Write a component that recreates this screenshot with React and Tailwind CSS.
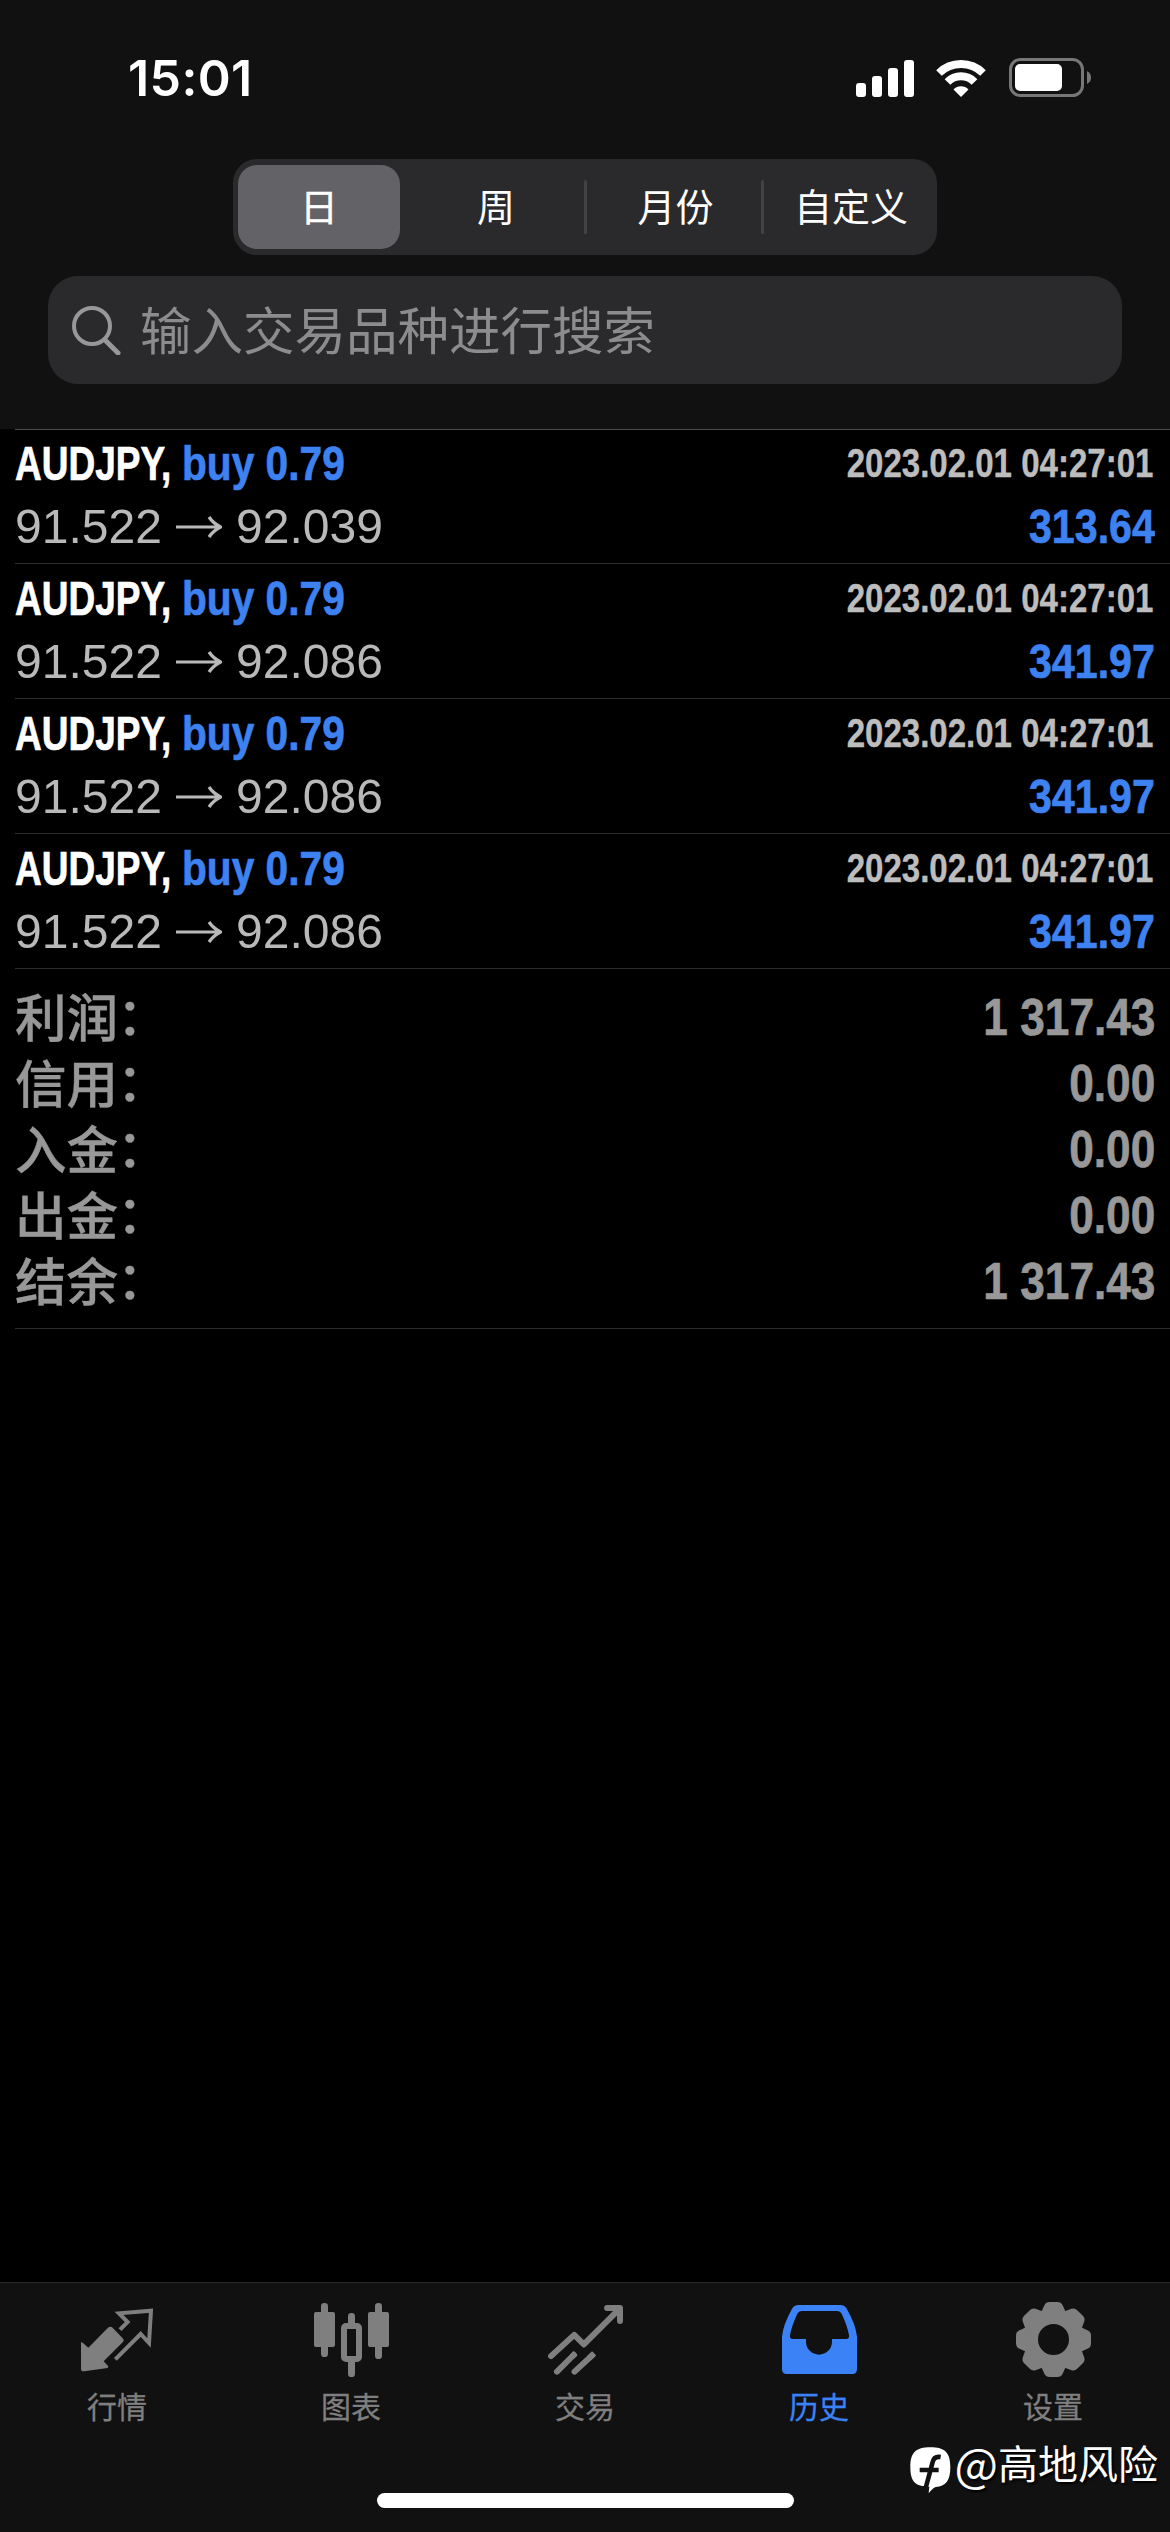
const trades = [
  { id: 1, open: "91.522", close: "92.039", profit: "313.64" },
  { id: 2, open: "91.522", close: "92.086", profit: "341.97" },
  { id: 3, open: "91.522", close: "92.086", profit: "341.97" },
  { id: 4, open: "91.522", close: "92.086", profit: "341.97" },
]

const totals = [
  { label: "利润", value: "1 317.43" },
  { label: "信用", value: "0.00" },
  { label: "入金", value: "0.00" },
  { label: "出金", value: "0.00" },
  { label: "结余", value: "1 317.43" },
]

const QuotesIcon = () => (
  <svg width="72" height="64" viewBox="240 112 216 192" fill="currentColor">
    <path d="M240 214 L246 217 L262 231 L321 171 Q328 165 335 171 L365 203 Q371 209 365 215 L308 272 L322 287 L320 292 L250 302 Q240 303 240 294 Z" />
    <path d="M357 177 L380 154 L354 128 L450 120 L444 217 L419 190 L343 266" fill="none" stroke="currentColor" strokeWidth="12" />
  </svg>
)

const ChartIcon = () => (
  <svg width="75" height="74" viewBox="939 96 225 222" fill="currentColor">
    <rect x="960" y="96" width="21" height="162" rx="10" />
    <rect x="939" y="123" width="63" height="105" rx="6" />
    <rect x="1122" y="96" width="21" height="168" rx="10" />
    <rect x="1101" y="123" width="63" height="105" rx="6" />
    <rect x="1041" y="126" width="21" height="48" rx="10" />
    <rect x="1041" y="258" width="21" height="60" rx="10" />
    <rect x="1029" y="165" width="45" height="99" rx="6" fill="none" stroke="currentColor" strokeWidth="18" />
  </svg>
)

const TradeIcon = () => (
  <svg width="75" height="70" viewBox="350 102 226 211" fill="none" stroke="currentColor" strokeWidth="18" strokeLinecap="round" strokeLinejoin="round">
    <path d="M359 256 L429 192 L458 221 L560 119" />
    <path d="M528 111 L567 111 L567 150" />
    <path d="M377 303 L428 252 M430 303 L483 254" />
    <path d="M422 258 L433 247 M474 262 L489 248" strokeLinecap="butt" />
  </svg>
)

const HistoryIcon = () => (
  <svg width="75" height="69" viewBox="1053 105 225 207" fill="currentColor">
    <path
      fillRule="evenodd"
      d="M1053 200 Q1056 165 1084 115 Q1091 105 1102 105 H1230 Q1240 105 1246 114 Q1275 165 1278 200 V298 Q1278 312 1264 312 H1067 Q1053 312 1053 298 Z M1112 123 Q1103 123 1099 131 Q1083 165 1077 195 Q1075 207 1086 207 H1125 V215 A39 39 0 0 0 1203 215 V207 H1245 Q1256 207 1254 195 Q1248 165 1232 131 Q1228 123 1219 123 Z"
    />
  </svg>
)

const GearIcon = () => (
  <svg width="75" height="75" viewBox="-37.5 -37.5 75 75" fill="currentColor">
    <circle r="22" fill="none" stroke="currentColor" strokeWidth="13" />
    {[0, 45, 90, 135, 180, 225, 270, 315].map((angle) => (
      <path key={angle} transform={`rotate(${angle})`} d="M-14 -24 L-12 -28 L-9 -34.5 Q-7.5 -37.5 -4 -37.5 H4 Q7.5 -37.5 9 -34.5 L12 -28 L14 -24 Z" />
    ))}
  </svg>
)

const tabs = [
  { id: "quotes", label: "行情", Icon: QuotesIcon },
  { id: "chart", label: "图表", Icon: ChartIcon },
  { id: "trade", label: "交易", Icon: TradeIcon },
  { id: "history", label: "历史", Icon: HistoryIcon },
  { id: "settings", label: "设置", Icon: GearIcon },
]

const StatusBar = () => (
  <div className="flex h-[159px] items-start justify-between pl-[128px] pr-[79px] pt-[48px] text-white">
    <span className="font-[Inter,sans-serif] text-[50px] font-semibold leading-[60px] tracking-[0.4px]">15:01</span>
    <div className="flex items-center pt-[10px]">
      <svg width="58" height="37" viewBox="0 0 58 37" fill="currentColor">
        <rect x="0" y="23" width="10" height="14" rx="3" />
        <rect x="16" y="16" width="10" height="21" rx="3" />
        <rect x="32" y="8" width="10" height="29" rx="3" />
        <rect x="48" y="0" width="10" height="37" rx="3" />
      </svg>
      <svg className="ml-[22px]" width="50" height="37" viewBox="0 0 50 37" fill="none" stroke="currentColor" strokeWidth="8">
        <path d="M3 13 A31.5 31.5 0 0 1 47 13" />
        <path d="M11.5 22 A19 19 0 0 1 38.500 22" />
        <path d="M25 37 L17.500 29.500 A10.500 10.500 0 0 1 32.500 29.500 Z" fill="currentColor" stroke="none" />
      </svg>
      <svg className="ml-[23px]" width="82" height="40" viewBox="0 0 82 40" fill="none">
        <rect x="1.500" y="1.500" width="72" height="36" rx="10" stroke="#77777a" strokeWidth="3" />
        <rect x="6" y="6" width="47" height="27" rx="5" fill="#fff" />
        <path d="M78 13 Q82 15 82 19.500 Q82 24 78 26 Z" fill="#77777a" />
      </svg>
    </div>
  </div>
)

const TradeRow = ({ trade }) => (
  <div className="flex h-[135px] flex-col border-b border-[#2c2c2e] pr-[15px] pt-[3px] text-[49px] leading-[63px] first:h-[134px] first:pt-[2px]">
    <div className="flex justify-between">
      <div className="flex font-bold [-webkit-text-stroke:0.7px_currentColor]">
        <span className="w-[167px] whitespace-nowrap text-white"><span className="inline-block origin-left scale-x-[0.755]">AUDJPY,</span></span>
        <span className="inline-block origin-left scale-x-[0.83] whitespace-nowrap text-[#3e82f1]">buy 0.79</span>
      </div>
      <span className="mr-[2px] inline-block origin-right scale-x-[0.826] text-[40px] font-bold text-[#bdbdbd] [-webkit-text-stroke:0.4px_currentColor]">2023.02.01 04:27:01</span>
    </div>
    <div className="flex justify-between">
      <div className="flex items-center text-[#b9b9b9]">
        <span className="w-[161px]"><span className="inline-block origin-left scale-x-[0.98]">{trade.open}</span></span>
        <svg width="46" height="22" viewBox="0 0 46 22" fill="none" stroke="currentColor" strokeWidth="3.200">
          <path d="M0 11 H44 M33 1 Q37 7 44.500 11 Q37 15 33 21" />
        </svg>
        <span className="ml-[14px] inline-block origin-left scale-x-[0.98]">{trade.close}</span>
      </div>
      <span className="inline-block origin-right scale-x-[0.84] font-bold text-[#3e82f1] [-webkit-text-stroke:0.7px_currentColor]">{trade.profit}</span>
    </div>
  </div>
)

const App = () => {
  const activeTab = "history"

  return (
    <div className="flex h-[2532px] w-[1170px] flex-col overflow-hidden bg-black font-['Liberation_Sans','Noto_Sans_CJK_SC',sans-serif]">
      <header className="h-[429px] bg-[#111111]">
        <StatusBar />

        {/* Period switch */}
        <div className="mx-auto flex h-[96px] w-[704px] items-center rounded-[24px] bg-[#2a2a2c] px-[5px] text-[38px] text-white">
          <div className="flex h-[84px] w-[162px] items-center justify-center rounded-[19px] bg-[#636266] pt-[2px] [-webkit-text-stroke:0.4px_currentColor]">日</div>
          <div className="flex w-[184px] justify-center pl-[8px] pt-[2px]">周</div>
          <div className="h-[54px] w-[3px] rounded-full bg-[#434346]" />
          <div className="flex w-[174px] justify-center pl-[3px] pt-[2px]">月份</div>
          <div className="h-[54px] w-[3px] rounded-full bg-[#434346]" />
          <div className="flex flex-1 justify-center pl-[6px] pt-[2px]">自定义</div>
        </div>

        {/* Search */}
        <div className="mx-[48px] mt-[21px] flex h-[108px] items-center rounded-[30px] bg-[#2a2a2c] pl-[24px] text-[#8c8c8f]">
          <svg width="49" height="49" viewBox="0 0 49 49" fill="none" stroke="#98989b" strokeLinecap="round">
            <circle cx="20" cy="20" r="18" strokeWidth="4" />
            <path d="M33 34 L46 47" strokeWidth="5" />
          </svg>
          <span className="ml-[19px] pt-[6px] text-[51.5px] leading-none">输入交易品种进行搜索</span>
        </div>
      </header>

      <main className="ml-[15px] flex-1">
        <div className="border-t border-[#4c4c4e]">
          {trades.map((trade) => (
            <TradeRow key={trade.id} trade={trade} />
          ))}
        </div>

        <div className="h-[360px] border-b border-[#2c2c2e] pr-[15px] pt-[15px] text-[#989898]">
          {totals.map((item) => (
            <div key={item.label} className="flex h-[66px] items-center justify-between">
              <div className="flex pt-[3px] text-[51.5px] font-medium leading-[66px] [-webkit-text-stroke:0.4px_currentColor]">
                <span>{item.label}</span>
                <span className="-ml-[1px] -mt-[2px]">：</span>
              </div>
              <span className="inline-block origin-right scale-x-[0.85] text-[52px] font-bold leading-[66px] [-webkit-text-stroke:0.7px_currentColor]">{item.value}</span>
            </div>
          ))}
        </div>
      </main>

      <footer className="relative h-[250px] border-t border-[#2a2a2c] bg-[#111111]">
        <nav className="grid grid-cols-5 pt-[19px]">
          {tabs.map(({ id, label, Icon }) => (
            <div key={id} className={`flex flex-col items-center ${id === activeTab ? "text-[#3b82f6]" : "text-[#7f7f7f]"}`}>
              <div className="flex h-[75px] items-center">
                <Icon />
              </div>
              <span className="mt-[13px] text-[30px] leading-[36px] [-webkit-text-stroke:0.3px_currentColor]">{label}</span>
            </div>
          ))}
        </nav>

        <div className="absolute bottom-[24px] left-[377px] h-[15px] w-[417px] rounded-full bg-white" />

        {/* Account tag lies over the tab bar */}
        <div className="absolute right-[12px] top-[146px] flex items-center text-white">
          <svg className="mr-[3px] mt-[18px]" width="41" height="47" viewBox="21 19 123 141">
            <path d="M82 20 C126 20 142 36 142 79 C142 122 128 136 98 139 C90 142 84 149 77 158 L79 138 C36 138 22 122 22 79 C22 36 38 20 82 20 Z" fill="#fff" />
            <path d="M113 49 Q93 46 89 64 L68 142 M50 88 H107" fill="none" stroke="#111" strokeWidth="14" />
          </svg>
          <div className="flex items-center whitespace-nowrap font-['Noto_Sans_CJK_SC',sans-serif] text-[40px] leading-[52px] [text-shadow:2px_2px_2px_#000]">
            <span className="text-[46px]">@</span>
            <span>高地风险</span>
          </div>
        </div>
      </footer>
    </div>
  )
}

export default App
